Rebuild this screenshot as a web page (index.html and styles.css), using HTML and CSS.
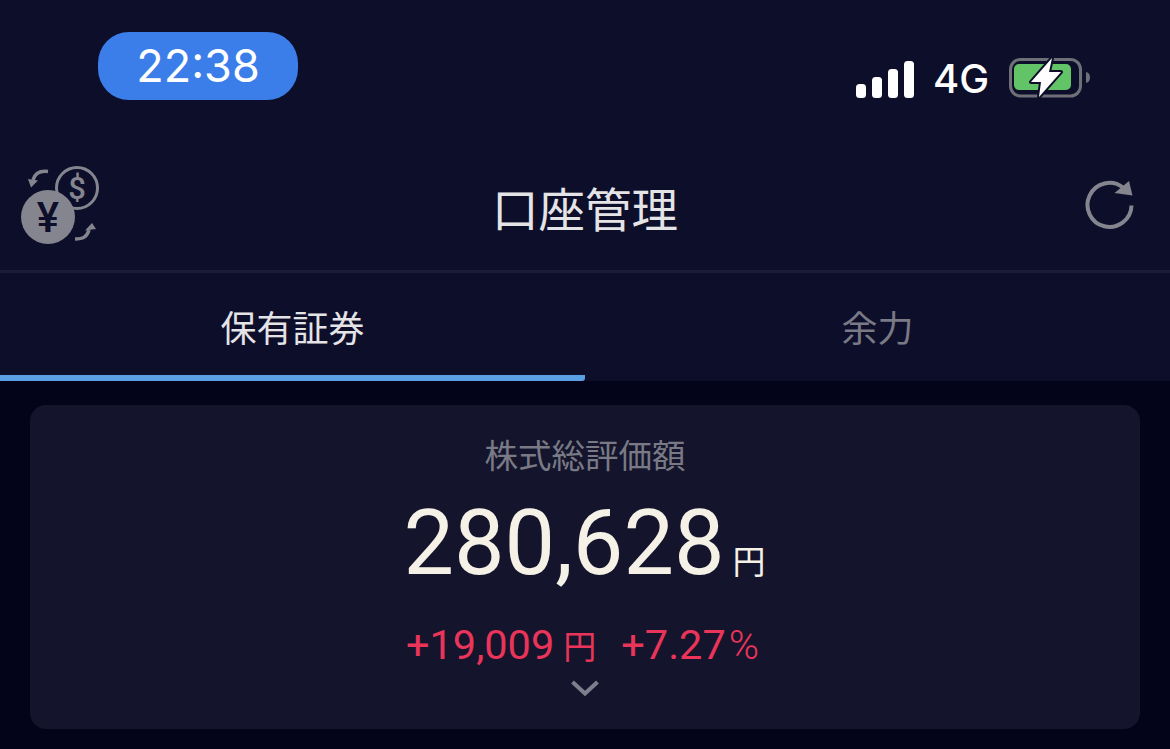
FILE: index.html
```html
<!DOCTYPE html>
<html lang="ja">
<head>
<meta charset="utf-8">
<title>口座管理</title>
<link rel="stylesheet" href="styles.css">
</head>
<body>
<div class="screen">
  <header class="top">
    <div class="status">
      <div class="time">22:38</div>
      <div class="status-right">
        <svg class="signal" width="58" height="38" viewBox="0 0 58 38"><rect x="0" y="24" width="10" height="14" rx="3.5"/><rect x="16" y="17" width="10" height="21" rx="3.5"/><rect x="32" y="9" width="10" height="29" rx="3.5"/><rect x="48" y="1" width="10" height="37" rx="3.5"/></svg>
        <span class="net">4G</span>
        <svg class="battery" width="82" height="46" viewBox="0 0 82 46"><rect x="2.500" y="3.500" width="70" height="36.500" rx="10" fill="none" stroke="#6f6f78" stroke-width="3"/><rect x="6" y="8" width="57" height="26" rx="5" fill="#62c466"/><path d="M78 16c3 .6 4 3 4 5.500s-1 4.900-4 5.500z" fill="#6f6f78"/><path d="M44 2 23 26h10l-2 15 22-25H41z" fill="#fff" stroke="#0d0e2a" stroke-width="4" stroke-linejoin="round" paint-order="stroke"/></svg>
      </div>
    </div>
    <div class="nav">
      <svg class="fx" width="80" height="80" viewBox="0 0 80 80">
        <circle cx="56" cy="23" r="20.500" fill="none" stroke="#85858f" stroke-width="3"/>
        <text x="56" y="34" class="dollar">$</text>
        <circle cx="27" cy="52" r="27" fill="#85858f"/>
        <text x="27" y="67" class="yen">¥</text>
        <path d="M27 6.500C19 5.500 14 8 12 15" fill="none" stroke="#85858f" stroke-width="3.500"/>
        <path d="M7 14l10 1.500-7 7z" fill="#85858f"/>
        <path d="M54 74c8 0 12-2 14-9" fill="none" stroke="#85858f" stroke-width="3.500"/>
        <path d="M64 65.500l11-1.500-4-6z" fill="#85858f"/>
      </svg>
      <h1 class="title">口座管理</h1>
      <svg class="reload" width="50" height="50" viewBox="0 0 50 50"><path d="M46.500 25.500A22 22 0 1 1 38 7.500" fill="none" stroke="#85858f" stroke-width="4"/><path d="M29.500 13 44 1l3.500 14.500z" fill="#85858f"/></svg>
    </div>
    <nav class="tabs">
      <div class="tab active">保有証券</div>
      <div class="tab">余力</div>
    </nav>
  </header>
  <main class="content">
    <section class="card">
      <div class="label">株式総評価額</div>
      <div class="total"><span class="num">280,628</span><span class="unit">円</span></div>
      <div class="change">
        <span class="item">+19,009<small class="yen-small">円</small></span>
        <span class="item">+7.27<small class="pct">%</small></span>
      </div>
      <svg class="chev" width="30" height="18" viewBox="0 0 30 18"><path d="M2.500 3 15 14.500 27.500 3" fill="none" stroke="#7d7f8c" stroke-width="4"/></svg>
    </section>
  </main>
</div>
</body>
</html>
```
FILE: styles.css
```css
html, body { margin: 0; padding: 0; }
body { background: #03031a; font-family: Roboto, "Noto Sans CJK JP", sans-serif; overflow: hidden; }
.screen { width: 1170px; height: 749px; display: flex; flex-direction: column; }
.top { background: #0d0e2a; height: 381px; display: flex; flex-direction: column; flex: none; }
.status { height: 160px; flex: none; display: flex; justify-content: space-between; padding: 32px 79px 0 98px; box-sizing: border-box; align-items: flex-start; }
.time { width: 200px; height: 68px; border-radius: 31px; background: #3b7de9; color: #fff; font: 400 45px/68px Inter, sans-serif; text-align: center; }
.status-right { display: flex; align-items: center; margin-top: 24px; margin-right: 1px; }
.signal { fill: #fff; }
.net { color: #fff; font: 500 40px/42px Inter, sans-serif; margin-left: 19px; width: 57px; }
.battery { margin-left: 18px; }
.nav { height: 110px; flex: none; display: flex; align-items: center; justify-content: space-between; padding: 0 35px 0 21px; border-bottom: 3px solid #1b1c36; position: relative; }
.fx { margin-top: -20px; overflow: visible; }
.reload { margin-top: -21px; }
.title { margin: 0; color: #e4e3e6; font: 400 46.500px/60px "Noto Sans CJK JP", sans-serif; position: absolute; left: 0; right: 0; text-align: center; top: 17px; }
.dollar { font: 500 31px Roboto, sans-serif; fill: #85858f; text-anchor: middle; }
.yen { font: 500 42px Roboto, sans-serif; fill: #0d0e2a; text-anchor: middle; }
.tabs { flex: 1; display: flex; }
.tab { flex: 1; text-align: center; color: #797a86; font: 400 36px/106px "Noto Sans CJK JP", sans-serif; height: 108px; box-sizing: border-box; }
.tab.active { color: #e4e3e6; border-bottom: 6px solid #5a9fe6; border-radius: 0 3px 3px 0; }
.content { flex: 1; padding: 24px 30px 0; }
.card { height: 324px; background: #14152c; border-radius: 16px; display: flex; flex-direction: column; align-items: center; box-sizing: border-box; padding-top: 27px; }
.label { color: #797a86; font: 400 33.500px/44px "Noto Sans CJK JP", sans-serif; }
.total { color: #f5f1e7; display: flex; align-items: baseline; margin-top: 16px; height: 104px; margin-right: 1px; }
.num { font: 400 90px/104px Roboto, sans-serif; }
.unit { font: 400 33px/40px "Noto Sans CJK JP", sans-serif; margin-left: 8px; }
.change { color: #ea3459; display: flex; gap: 25px; font: 400 41.500px/48px Roboto, sans-serif; margin-top: 25px; margin-right: 5px; }
.yen-small { font: 400 33px/40px "Noto Sans CJK JP", sans-serif; margin-left: 9px; }
.pct { font: 300 41px/40px Roboto, sans-serif; margin-left: 3px; }
.chev { margin-top: 10px; }
```
